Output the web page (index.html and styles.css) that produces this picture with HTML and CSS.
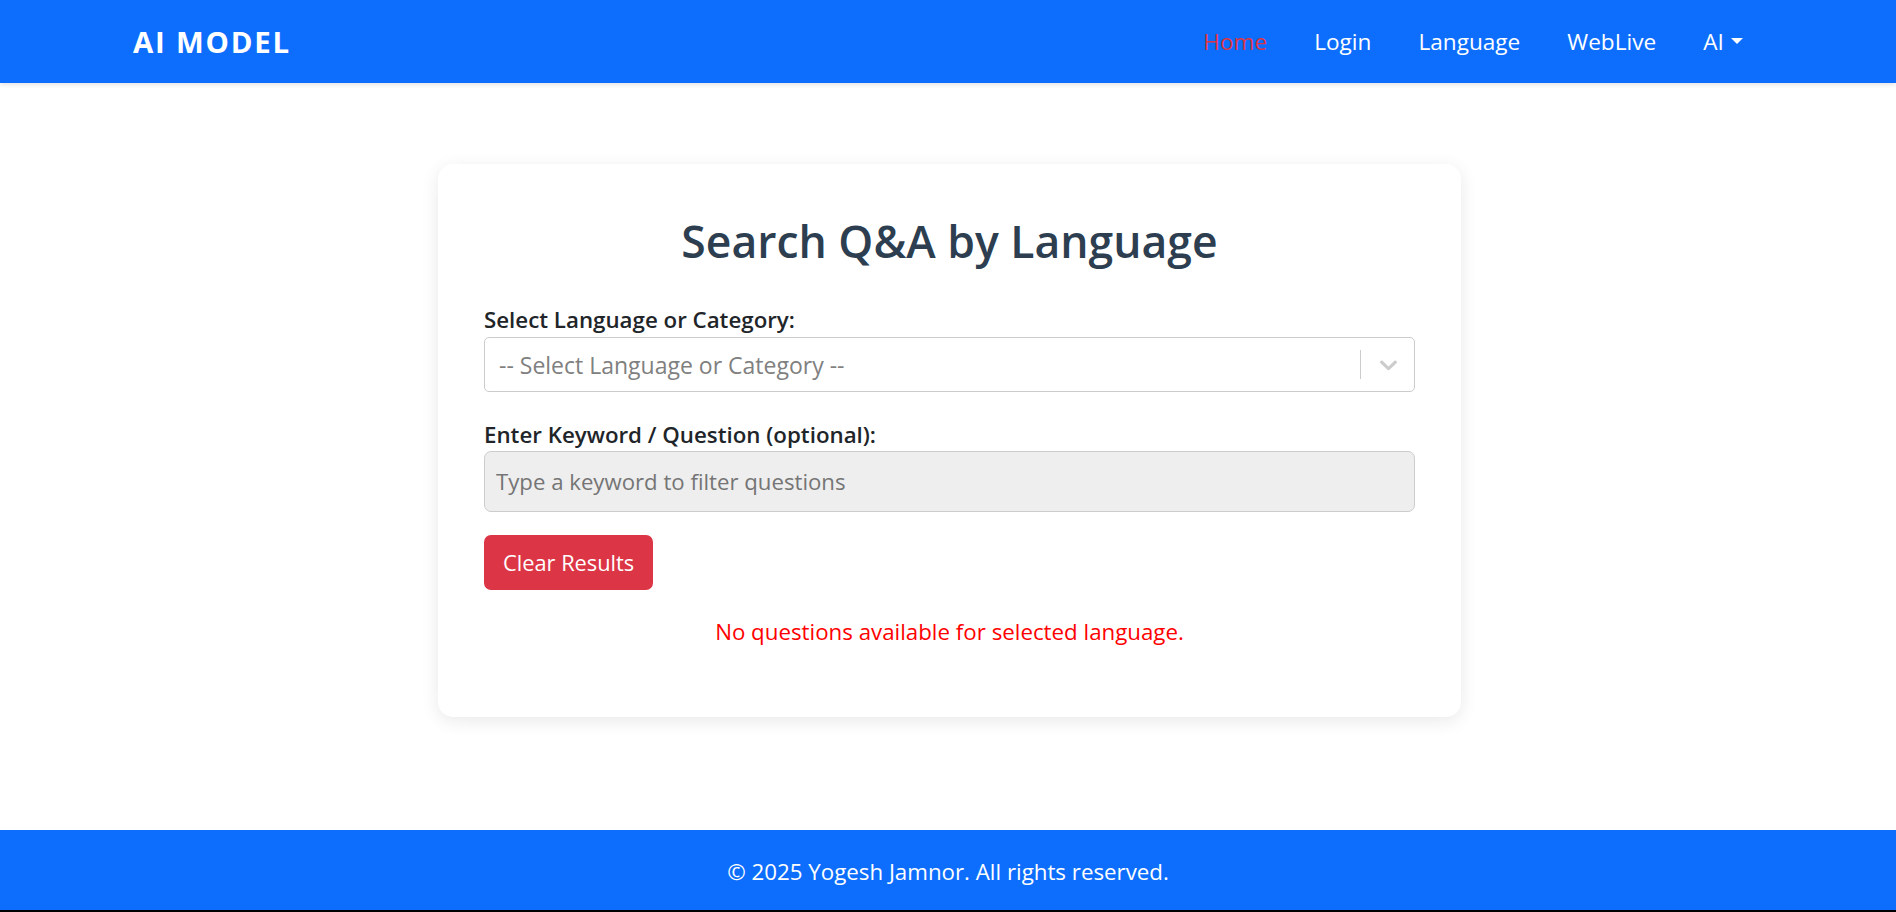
FILE: index.html
```html
<!DOCTYPE html>
<html lang="en">
<head>
<meta charset="utf-8">
<title>AI MODEL</title>
<link rel="stylesheet" href="styles.css">
</head>
<body>
<nav class="navbar">
  <a class="brand" href="#">AI MODEL</a>
  <ul class="nav-links">
    <li><a class="nav-link active" href="#">Home</a></li>
    <li><a class="nav-link" href="#">Login</a></li>
    <li><a class="nav-link" href="#">Language</a></li>
    <li><a class="nav-link" href="#">WebLive</a></li>
    <li><a class="nav-link dropdown-toggle" href="#">AI</a></li>
  </ul>
</nav>
<main class="main">
  <section class="card">
    <h2 class="card-title">Search Q&amp;A by Language</h2>
    <div class="field field-select">
      <label class="field-label">Select Language or Category:</label>
      <div class="select">
        <div class="select-value">-- Select Language or Category --</div>
        <div class="select-indicators">
          <span class="select-sep"></span>
          <span class="select-arrow">
            <svg viewBox="0 0 20 20" width="29" height="29" aria-hidden="true"><path d="M4.516 7.548c0.436-0.446 1.043-0.481 1.576 0l3.908 3.747 3.908-3.747c0.533-0.481 1.141-0.446 1.574 0 0.436 0.445 0.408 1.197 0 1.615-0.406 0.418-4.695 4.502-4.695 4.502-0.217 0.223-0.502 0.335-0.787 0.335s-0.57-0.112-0.789-0.335c0 0-4.287-4.084-4.695-4.502s-0.436-1.17 0-1.615z" fill="currentColor"></path></svg>
          </span>
        </div>
      </div>
    </div>
    <div class="field field-keyword">
      <label class="field-label">Enter Keyword / Question (optional):</label>
      <input class="text-input" type="text" placeholder="Type a keyword to filter questions">
    </div>
    <button class="btn-clear" type="button">Clear Results</button>
    <p class="message">No questions available for selected language.</p>
  </section>
</main>
<footer class="footer">© 2025 Yogesh Jamnor. All rights reserved.</footer>
</body>
</html>
```
FILE: styles.css
```css
* { box-sizing: border-box; }

html {
  background: #000;
}

body {
  margin: 0;
  min-height: calc(100vh - 2px);
  display: flex;
  flex-direction: column;
  background: #fff;
  font-family: "Open Sans", "Noto Sans", sans-serif;
  color: #212529;
}

.navbar {
  height: 83px;
  flex-shrink: 0;
  background: #0d6efd;
  display: flex;
  align-items: center;
  justify-content: space-between;
  padding: 0 130px 0 133px;
  box-shadow: 0 2px 4px rgba(0, 0, 0, 0.1);
  position: relative;
  z-index: 1;
}

.brand {
  color: #fff;
  text-decoration: none;
  font-weight: 700;
  font-size: 29.4px;
  letter-spacing: 1.8px;
  line-height: 1;
  padding-top: 3px;
}

.nav-links {
  list-style: none;
  display: flex;
  margin: 0;
  padding: 2px 0 0;
}

.nav-link {
  display: block;
  padding: 0 23.5px;
  color: #fff;
  text-decoration: none;
  font-size: 22.6px;
  line-height: 1;
}

.nav-link.active {
  color: #dc3545;
}

.dropdown-toggle::after {
  content: "";
  display: inline-block;
  margin-left: 0.3em;
  vertical-align: 0.255em;
  border-top: 0.3em solid;
  border-left: 0.3em solid transparent;
  border-right: 0.3em solid transparent;
}

.main {
  flex: 1;
  padding: 81px 0 60px 3px;
  display: flex;
  justify-content: center;
  align-items: flex-start;
}

.card {
  width: 1023px;
  background: #fff;
  border-radius: 15px;
  box-shadow: 0 4px 18px rgba(0, 0, 0, 0.09);
  padding: 46px;
}

.card-title {
  margin: 4px 0 36px;
  text-align: center;
  font-size: 44.5px;
  font-weight: 600;
  line-height: 1.2;
  color: #2c3e50;
}

.field {
  display: flex;
  flex-direction: column;
}

.field-select {
  margin-bottom: 26px;
}

.field-keyword {
  margin-bottom: 23px;
}

.field-label {
  font-size: 22.3px;
  font-weight: 600;
  line-height: 1.5;
  color: #212529;
}

.select {
  height: 55px;
  border: 1px solid #cccccc;
  border-radius: 5px;
  display: flex;
  align-items: center;
  background: #fff;
}

.select-value {
  flex: 1;
  padding-left: 14px;
  font-size: 23px;
  color: #808080;
  padding-top: 2px;
}

.select-indicators {
  display: flex;
  align-items: center;
  align-self: stretch;
}

.select-sep {
  width: 1px;
  height: 29px;
  background: #cccccc;
}

.select-arrow {
  display: flex;
  color: #cccccc;
  padding: 0 11px 0 13px;
}

.text-input {
  height: 61px;
  border: 1px solid #cccccc;
  border-radius: 7px;
  background: #eeeeee;
  font-family: inherit;
  font-size: 22.2px;
  padding: 0 11px;
  color: #212529;
  outline: none;
}

.text-input::placeholder {
  color: #757575;
}

.btn-clear {
  display: block;
  height: 55px;
  padding: 0 19px;
  border: none;
  border-radius: 7px;
  background: #dc3545;
  color: #fff;
  font-family: inherit;
  font-size: 21.8px;
  line-height: 1;
}

.message {
  margin: 25px 0 22px;
  text-align: center;
  color: #ff0000;
  font-size: 22.3px;
  line-height: 1.5;
}

.footer {
  height: 80px;
  flex-shrink: 0;
  background: #0d6efd;
  color: #fff;
  display: flex;
  align-items: center;
  justify-content: center;
  font-size: 22.3px;
  padding-top: 3px;
}
```
